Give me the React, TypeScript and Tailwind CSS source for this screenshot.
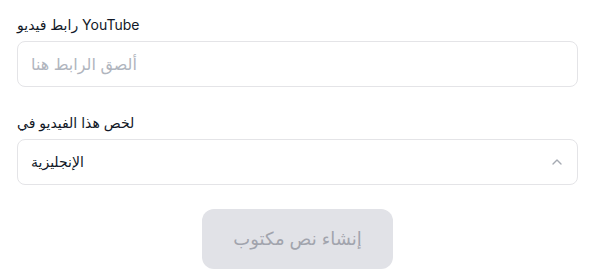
import React from "react";
import { ChevronUp } from "lucide-react";

export default function App() {
  return (
    <div
      className="w-[595px] h-[279px] bg-white px-[17px] pt-[15px] text-[#111827]"
      style={{ fontFamily: "Inter, 'DejaVu Sans', sans-serif" }}
    >
      <div className="text-sm leading-5 h-5">رابط فيديو YouTube</div>
      <div className="mt-[6px] h-[46px] rounded-lg border border-[#e4e4e7] flex items-center px-[13px]">
        <span className="text-base text-[#b0b5be]">ألصق الرابط هنا</span>
      </div>
      <div className="mt-[26px] text-sm leading-5 h-5">لخص هذا الفيديو في</div>
      <div className="mt-[6px] h-[46px] rounded-lg border border-[#e4e4e7] flex items-center justify-between pl-[13px] pr-[12px]">
        <span className="text-sm">الإنجليزية</span>
        <ChevronUp size={16} className="text-[#6b7280] opacity-60" />
      </div>
      <div className="mt-[24px] flex justify-center">
        <button className="w-[191px] h-[60px] rounded-xl bg-[#e1e2e7] text-[#a1a4ad] text-lg">
          إنشاء نص مكتوب
        </button>
      </div>
    </div>
  );
}
